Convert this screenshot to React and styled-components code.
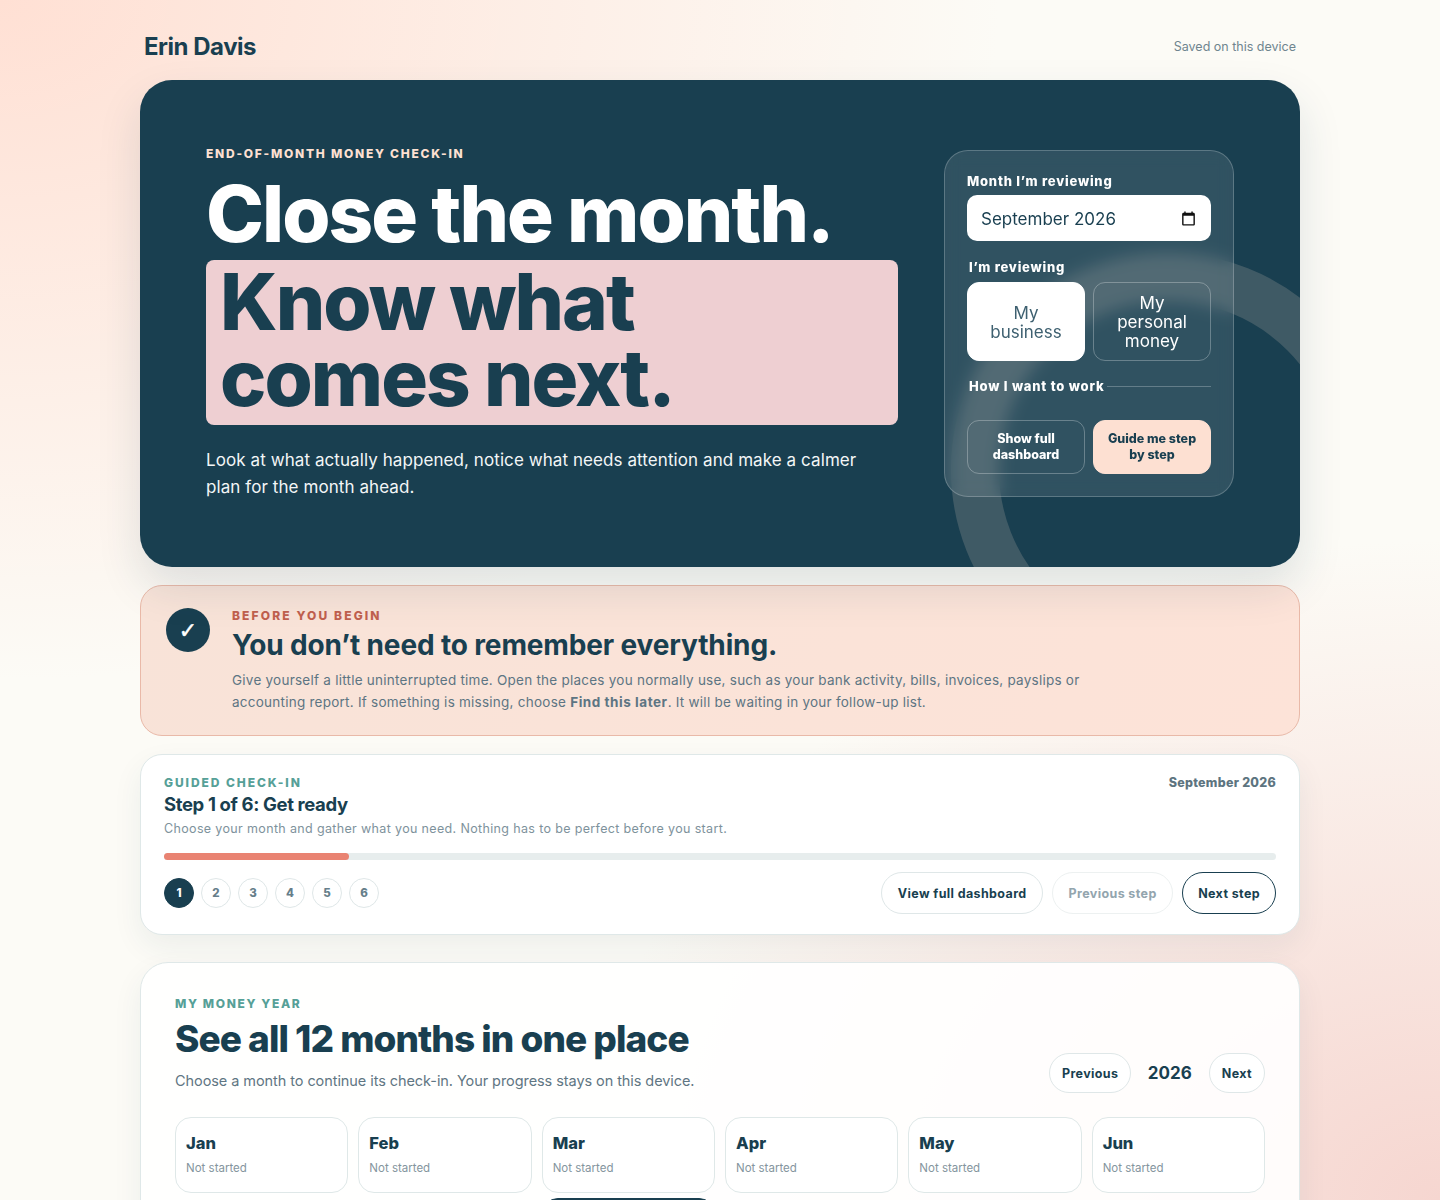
import React from "react";
import styled, { createGlobalStyle } from "styled-components";

const ink = "#193f50";

const GlobalStyle = createGlobalStyle`
  * { box-sizing: border-box; }
  html, body { margin: 0; height: 1200px; overflow: hidden; }
  body {
    font-family: Inter, "Open Sans", sans-serif;
    color: ${ink};
    background:
      radial-gradient(ellipse 860px 660px at 100% 100%, #f6d6d0 0, rgba(246,214,208,0) 100%),
      radial-gradient(ellipse 1000px 680px at 0 0, #ffe0d4 0, rgba(255,224,212,0) 100%),
      #fcfbf6;
  }
`;

const Page = styled.div`
  width: 1160px;
  margin: 0 auto;
`;

const TopBar = styled.header`
  height: 80px;
  padding: 12px 4px 0 4px;
  display: flex;
  align-items: center;
  justify-content: space-between;
`;

const Brand = styled.div`
  font-size: 24px;
  font-weight: 700;
  letter-spacing: -0.02em;
`;

const Saved = styled.div`
  font-size: 12.5px;
  color: #6f858f;
`;

const Hero = styled.section`
  position: relative;
  overflow: hidden;
  background: ${ink};
  border-radius: 32px;
  padding: 66px;
  display: grid;
  grid-template-columns: 692px 290px;
  justify-content: space-between;
  align-items: center;
  box-shadow: 0 20px 44px rgba(26, 64, 82, 0.13);
`;

const Ring = styled.div`
  position: absolute;
  width: 434px;
  height: 434px;
  right: -85px;
  bottom: -120px;
  border-radius: 50%;
  border: 48px solid rgba(253, 224, 210, 0.17);
`;

const Copy = styled.div`
  position: relative;
`;

const Eyebrow = styled.div`
  font-size: 12px;
  font-weight: 800;
  letter-spacing: ${(p) => p.$spacing}em;
  line-height: 15px;
  color: ${(p) => p.$color};
  text-transform: uppercase;
`;

const HeroTitle = styled.h1`
  margin: 15px 0 0;
  font-size: 78px;
  font-weight: 800;
  line-height: 76px;
  letter-spacing: -0.025em;
  color: #fff;
`;

const Highlight = styled.span`
  display: block;
  margin-top: 8px;
  padding: 4px 14px 9px 14px;
  background: #eecfd2;
  border-radius: 8px;
  color: ${ink};
`;

const Lead = styled.p`
  margin: 22px 0 0;
  font-size: 17px;
  line-height: 27px;
  letter-spacing: 0.08px;
  color: #f3f6f7;
`;

const Panel = styled.form`
  position: relative;
  padding: 22px;
  border: 1px solid rgba(255, 255, 255, 0.22);
  border-radius: 24px;
  background: rgba(255, 255, 255, 0.1);
  backdrop-filter: blur(8px);
`;

const FieldLabel = styled.label`
  display: block;
  font-size: 13px;
  font-weight: 800;
  line-height: 16px;
  letter-spacing: 0.06em;
  color: #fff;
`;

const MonthBox = styled.div`
  height: 46px;
  margin-top: 6px;
  padding: 0 14px;
  border-radius: 10px;
  background: #fff;
  display: flex;
  align-items: center;
  justify-content: space-between;
`;

const MonthText = styled.input`
  width: 170px;
  padding: 1px 0 0;
  border: 0;
  outline: 0;
  background: transparent;
  color: ${ink};
  font-family: inherit;
  font-size: 17px;
`;

const Legend = styled.div`
  margin: ${(p) => p.$top}px 0 ${(p) => p.$bottom}px;
  padding-left: 2px;
  display: flex;
  align-items: center;
  gap: 3px;
  font-size: 13px;
  font-weight: 800;
  line-height: 16px;
  letter-spacing: 0.06em;
  color: #fff;
  ${(p) => p.$rule && `
    &::after {
      content: "";
      flex: 1;
      height: 1px;
      background: rgba(255, 255, 255, 0.25);
    }
  `}
`;

const Pair = styled.div`
  display: grid;
  grid-template-columns: 1fr 1fr;
  gap: 8px;
`;

const Choice = styled.button`
  height: 79px;
  padding: 2px 18px 0;
  border: 1px solid ${(p) => (p.$on ? "#fff" : "rgba(255,255,255,0.28)")};
  border-radius: 12px;
  background: ${(p) => (p.$on ? "#fff" : "transparent")};
  color: ${(p) => (p.$on ? "#3e6070" : "#fff")};
  font-family: inherit;
  font-size: 17px;
  line-height: 19px;
`;

const ModeButton = styled.button`
  height: 54px;
  padding: 0 12px;
  border: 1px solid ${(p) => (p.$on ? "#fde0d2" : "rgba(255,255,255,0.28)")};
  border-radius: 12px;
  background: ${(p) => (p.$on ? "#fde0d2" : "transparent")};
  color: ${(p) => (p.$on ? ink : "#fff")};
  font-family: inherit;
  font-size: 12.5px;
  font-weight: 800;
  line-height: 16px;
`;

const Notice = styled.section`
  margin-top: 18px;
  height: 151px;
  padding: 22px 25px;
  display: flex;
  gap: 22px;
  border: 1px solid #e9b9a8;
  border-radius: 22px;
  background: linear-gradient(120deg, #f8e3d8, #fde3d8);
`;

const CheckBadge = styled.div`
  flex: none;
  width: 44px;
  height: 44px;
  border-radius: 50%;
  background: ${ink};
  color: #fff;
  display: grid;
  place-items: center;
  font-family: "DejaVu Sans", sans-serif;
  font-size: 22px;
  font-weight: 700;
  -webkit-text-stroke: 0.5px #fff;
`;

const NoticeBody = styled.div`
  min-width: 0;
`;

const NoticeTitle = styled.h2`
  margin: 5px 0 0;
  font-size: 28px;
  font-weight: 700;
  line-height: 34px;
  letter-spacing: -0.005em;
`;

const NoticeText = styled.p`
  margin: 7px 0 0;
  max-width: 880px;
  font-size: 13.5px;
  line-height: 22px;
  letter-spacing: 0.018em;
  color: #5d7583;

  strong {
    font-weight: 700;
    letter-spacing: 0.04em;
  }
`;

const Card = styled.section`
  margin-top: ${(p) => p.$top}px;
  border: 1px solid #dfe8e8;
  border-radius: ${(p) => p.$radius}px;
  background: #fff;
  box-shadow: 0 12px 30px rgba(26, 64, 82, 0.07);
`;

const StepCard = styled(Card)`
  height: 181px;
  padding: 20px 23px;
`;

const Row = styled.div`
  display: flex;
  align-items: ${(p) => p.$align || "center"};
  justify-content: space-between;
`;

const MonthTag = styled.div`
  font-size: 12.5px;
  font-weight: 800;
  line-height: 15px;
  letter-spacing: 0.02em;
  color: #5d7480;
`;

const StepTitle = styled.h3`
  margin: 2px 0 0;
  font-size: 18.5px;
  font-weight: 700;
  line-height: 24px;
  letter-spacing: -0.02em;
`;

const StepText = styled.p`
  margin: 3px 0 0;
  font-size: 12.5px;
  line-height: 20px;
  letter-spacing: 0.028em;
  color: #7e929c;
`;

const Track = styled.div`
  height: 7px;
  margin-top: 14px;
  border-radius: 4px;
  background: #e7eded;
`;

const Fill = styled.div`
  height: 100%;
  border-radius: 4px;
  background: #e98372;
`;

const StepRow = styled(Row)`
  margin-top: 12px;
`;

const Dots = styled.div`
  display: flex;
  gap: 7px;
`;

const Dot = styled.div`
  width: 30px;
  height: 30px;
  border-radius: 50%;
  border: 1px solid ${(p) => (p.$on ? ink : "#dfe7e8")};
  background: ${(p) => (p.$on ? ink : "#fff")};
  color: ${(p) => (p.$on ? "#fff" : "#667e8a")};
  display: grid;
  place-items: center;
  font-size: 11.5px;
  font-weight: 800;
`;

const Actions = styled.div`
  display: flex;
  gap: 9px;
`;

const Pill = styled.button`
  height: ${(p) => p.$height || 42}px;
  padding: 0 ${(p) => p.$pad || 15}px;
  border: 1px solid ${(p) => (p.$strong ? ink : p.$muted ? "#edf1f1" : "#dfe7e8")};
  border-radius: 22px;
  background: #fff;
  color: ${(p) => (p.$muted ? "#93a5ae" : ink)};
  font-family: inherit;
  font-size: 12.5px;
  font-weight: 700;
  letter-spacing: 0.03em;
`;

const YearCard = styled(Card)`
  height: 500px;
  padding: 33px 34px;
  background: rgba(255, 255, 255, 0.9);
`;

const YearTitle = styled.h2`
  margin: 5px 0 0;
  font-size: 37px;
  font-weight: 800;
  line-height: 46px;
  letter-spacing: -0.026em;
`;

const YearText = styled.p`
  margin: 8px 0 0;
  font-size: 14.5px;
  line-height: 22px;
  letter-spacing: -0.005em;
  color: #5f7683;
`;

const YearNav = styled.div`
  display: flex;
  align-items: center;
  gap: 17px;
  margin-bottom: -1px;
`;

const YearValue = styled.div`
  font-size: 17px;
  font-weight: 700;
`;

const MonthGrid = styled.div`
  margin-top: 25px;
  display: grid;
  grid-template-columns: repeat(6, 1fr);
  gap: 10px;
`;

const MonthTile = styled.div`
  height: 76px;
  padding: 15px 10px;
  border: 1px solid ${(p) => (p.$on ? ink : "#dfe8e8")};
  border-radius: 16px;
  background: ${(p) => (p.$on ? ink : "#fff")};
  color: ${(p) => (p.$on ? "#fff" : ink)};
  ${(p) => p.$on && "transform: translateY(-5px);"}
`;

const MonthName = styled.div`
  font-size: 16.5px;
  font-weight: 800;
  line-height: 20px;
`;

const MonthState = styled.div`
  margin-top: 7px;
  font-size: 11.5px;
  line-height: 16px;
  color: ${(p) => (p.$on ? "#dfe7e8" : "#84959e")};
`;

const CalendarIcon = () => (
  <svg width="17" height="17" viewBox="0 0 24 24" fill="#111">
    <path d="M19 4h-1V2h-2v2H8V2H6v2H5c-1.1 0-2 .9-2 2v14c0 1.1.9 2 2 2h14c1.1 0 2-.9 2-2V6c0-1.1-.9-2-2-2zm0 16H5V8h14v12z" />
  </svg>
);

const months = ["Jan", "Feb", "Mar", "Apr", "May", "Jun", "Jul", "Aug", "Sep", "Oct", "Nov", "Dec"];

export default function App() {
  return (
    <Page>
      <GlobalStyle />
      <TopBar>
        <Brand>Erin Davis</Brand>
        <Saved>Saved on this device</Saved>
      </TopBar>

      <Hero>
        <Ring />
        <Copy>
          <Eyebrow $color="#fde0d2" $spacing={0.145}>End-of-month money check-in</Eyebrow>
          <HeroTitle>
            Close the month.
            <Highlight>Know what<br />comes next.</Highlight>
          </HeroTitle>
          <Lead>
            Look at what actually happened, notice what needs attention and make a calmer<br />
            plan for the month ahead.
          </Lead>
        </Copy>
        <Panel>
          <FieldLabel htmlFor="month">Month I’m reviewing</FieldLabel>
          <MonthBox>
            <MonthText id="month" readOnly value="September 2026" />
            <CalendarIcon />
          </MonthBox>
          <Legend $top={18} $bottom={7}>I’m reviewing</Legend>
          <Pair>
            <Choice type="button" $on>My<br />business</Choice>
            <Choice type="button">My<br />personal<br />money</Choice>
          </Pair>
          <Legend $top={17} $bottom={26} $rule>How I want to work</Legend>
          <Pair>
            <ModeButton type="button">Show full<br />dashboard</ModeButton>
            <ModeButton type="button" $on>Guide me step<br />by step</ModeButton>
          </Pair>
        </Panel>
      </Hero>

      <Notice>
        <CheckBadge>✓</CheckBadge>
        <NoticeBody>
          <Eyebrow $color="#c1604e" $spacing={0.178}>Before you begin</Eyebrow>
          <NoticeTitle>You don’t need to remember everything.</NoticeTitle>
          <NoticeText>
            Give yourself a little uninterrupted time. Open the places you normally use, such as your bank activity, bills, invoices, payslips or<br />
            accounting report. If something is missing, choose <strong>Find this later</strong>. It will be waiting in your follow-up list.
          </NoticeText>
        </NoticeBody>
      </Notice>

      <StepCard $top={18} $radius={22}>
        <Row>
          <Eyebrow $color="#56a097" $spacing={0.16}>Guided check-in</Eyebrow>
          <MonthTag>September 2026</MonthTag>
        </Row>
        <StepTitle>Step 1 of 6: Get ready</StepTitle>
        <StepText>Choose your month and gather what you need. Nothing has to be perfect before you start.</StepText>
        <Track>
          <Fill style={{ width: `${100 / 6}%` }} />
        </Track>
        <StepRow>
          <Dots>
            {[1, 2, 3, 4, 5, 6].map((n) => (
              <Dot key={n} $on={n === 1}>{n}</Dot>
            ))}
          </Dots>
          <Actions>
            <Pill type="button" $pad={15.5}>View full dashboard</Pill>
            <Pill type="button" $pad={15.5} $muted>Previous step</Pill>
            <Pill type="button" $strong>Next step</Pill>
          </Actions>
        </StepRow>
      </StepCard>

      <YearCard $top={27} $radius={28}>
        <Row $align="flex-end">
          <div>
            <Eyebrow $color="#56a097" $spacing={0.135}>My money year</Eyebrow>
            <YearTitle>See all 12 months in one place</YearTitle>
            <YearText>Choose a month to continue its check-in. Your progress stays on this device.</YearText>
          </div>
          <YearNav>
            <Pill type="button" $height={40} $pad={11.5}>Previous</Pill>
            <YearValue>2026</YearValue>
            <Pill type="button" $height={40} $pad={12}>Next</Pill>
          </YearNav>
        </Row>
        <MonthGrid>
          {months.map((m) => (
            <MonthTile key={m} $on={m === "Sep"}>
              <MonthName>{m}</MonthName>
              <MonthState $on={m === "Sep"}>Not started</MonthState>
            </MonthTile>
          ))}
        </MonthGrid>
      </YearCard>
    </Page>
  );
}
